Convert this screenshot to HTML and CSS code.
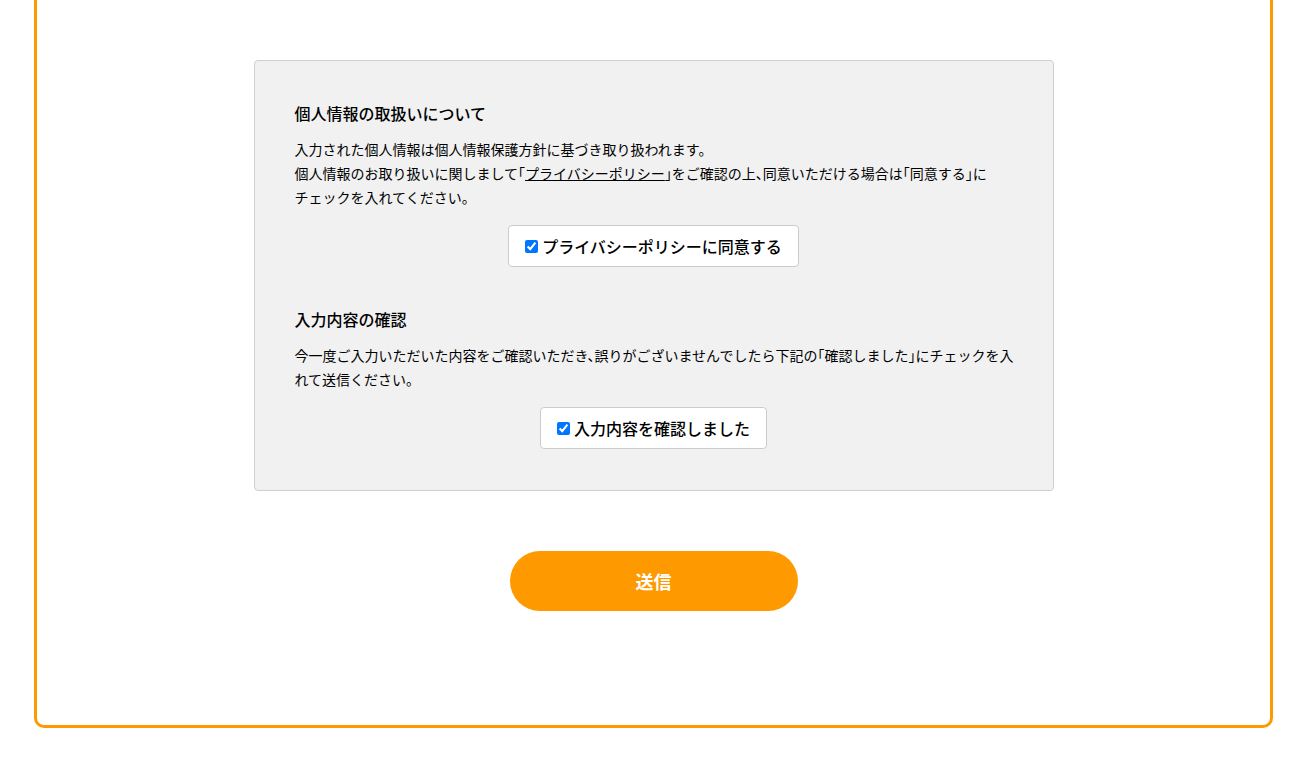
FILE: index.html
```html
<!DOCTYPE html>
<html lang="ja">
<head>
<meta charset="utf-8">
<title>確認</title>
<link rel="stylesheet" href="styles.css">
</head>
<body>
<div class="page">
  <div class="frame">
    <div class="consent">
      <section class="block">
        <h2 class="block-title">個人情報の取扱いについて</h2>
        <p class="block-text">入力された個人情報は個人情報保護方針に基づき取り扱われます。<br>個人情報のお取り扱いに関しまして「<a class="link" href="#">プライバシーポリシー</a>」をご確認の上、同意いただける場合は「同意する」に<br>チェックを入れてください。</p>
        <div class="check-row">
          <label class="check-box"><input type="checkbox" checked><span>プライバシーポリシーに同意する</span></label>
        </div>
      </section>
      <section class="block block-second">
        <h2 class="block-title">入力内容の確認</h2>
        <p class="block-text">今一度ご入力いただいた内容をご確認いただき、誤りがございませんでしたら下記の「確認しました」にチェックを入<br>れて送信ください。</p>
        <div class="check-row">
          <label class="check-box"><input type="checkbox" checked><span>入力内容を確認しました</span></label>
        </div>
      </section>
    </div>
    <div class="submit-row">
      <button class="submit" type="button">送信</button>
    </div>
  </div>
</div>
</body>
</html>
```

FILE: styles.css
```css
* { box-sizing: border-box; }
html, body { margin: 0; padding: 0; background: #fff; }
body {
  font-family: "Noto Sans CJK JP", "Noto Sans", sans-serif;
  color: #000;
}
.page {
  padding: 0 35px 32px 34px;
}
.frame {
  border: 3px solid #ff9900;
  border-top: none;
  border-radius: 0 0 10px 10px;
  padding: 60px 0 114px;
}
.consent {
  width: 800px;
  margin: 0 auto;
  background: #f1f1f1;
  border: 1px solid #cfcfcf;
  border-radius: 4px;
  padding: 40px 40px 41px;
}
.block-second { margin-top: 40px; }
.block-title {
  margin: 0;
  font-size: 16px;
  line-height: 24px;
  font-weight: 500;
}
.block-text {
  margin: 12px 0 0;
  font-size: 14px;
  line-height: 24px;
  font-weight: 400;
  white-space: nowrap;
  font-feature-settings: "halt";
}
.link { color: #000; text-decoration: underline; }
.check-row {
  display: flex;
  justify-content: center;
  margin-top: 16px;
}
.check-box {
  display: inline-flex;
  align-items: center;
  background: #fff;
  border: 1px solid #cccccc;
  border-radius: 4px;
  padding: 8px 16px;
  font-size: 16px;
  line-height: 24px;
  font-weight: 500;
}
.check-box input {
  margin: 0 4px 0 0;
  width: 13px;
  height: 13px;
}
.submit-row {
  display: flex;
  justify-content: center;
  margin-top: 60px;
}
.submit {
  width: 288px;
  height: 60px;
  border: none;
  border-radius: 30px;
  background: #ff9900;
  color: #fff;
  font-family: "Noto Sans CJK JP", "Noto Sans", sans-serif;
  font-size: 18px;
  line-height: 24px;
  font-weight: 700;
  padding: 0 0 1px;
}
```
